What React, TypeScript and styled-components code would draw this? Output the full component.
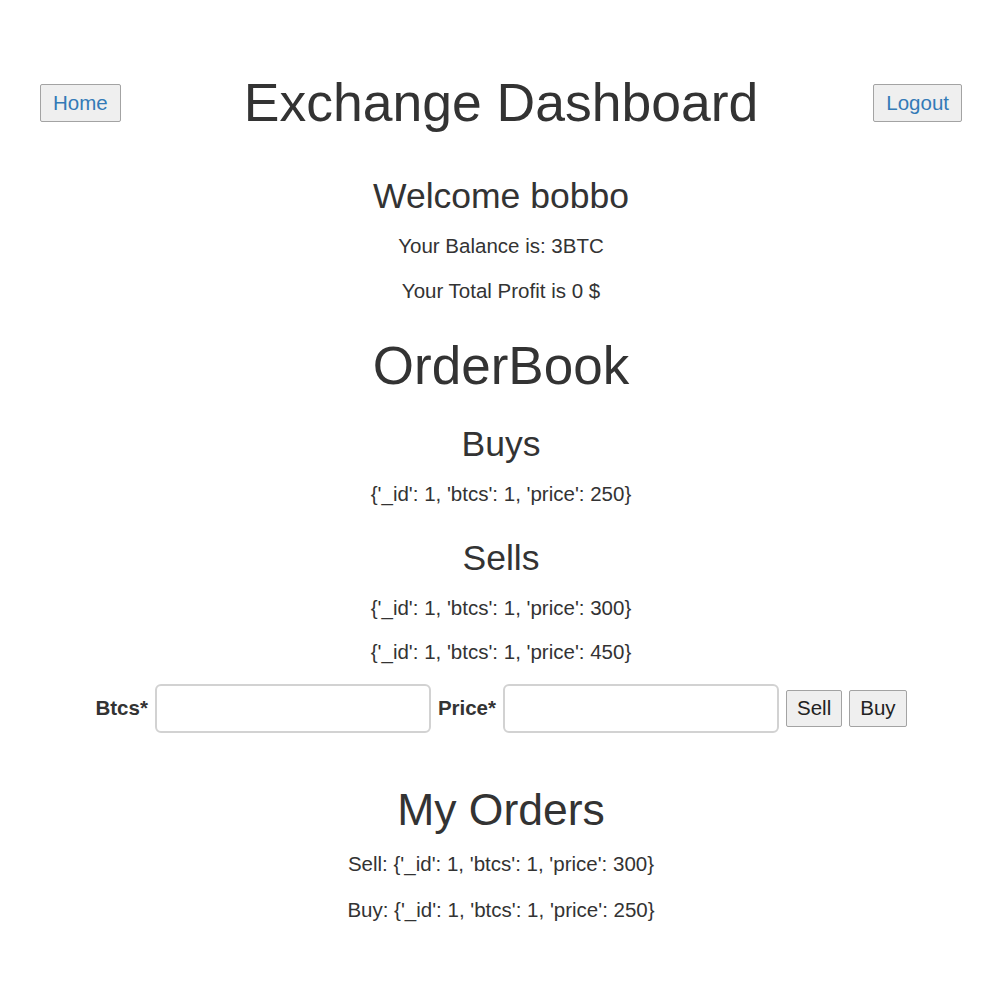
import styled, { createGlobalStyle } from 'styled-components';

const GlobalStyle = createGlobalStyle`
  html, body {
    margin: 0;
    padding: 0;
    background: #fff;
  }
  body {
    font-family: "Liberation Sans", Arial, Helvetica, sans-serif;
    font-size: 20.5px;
    line-height: 1.43;
    color: #333;
  }
`;

const Page = styled.div`
  padding: 74px 38px 40px 40px;
  text-align: center;
`;

const Header = styled.header`
  display: grid;
  grid-template-columns: 1fr auto 1fr;
  align-items: center;
  height: 58px;
`;

const NavButton = styled.button<{ $side: 'left' | 'right' }>`
  justify-self: ${({ $side }) => ($side === 'left' ? 'start' : 'end')};
  height: 38px;
  padding: 0 12px;
  font-family: inherit;
  font-size: 20.5px;
  color: #337ab7;
  background: #efefef;
  border: 1px solid #a3a3a3;
  border-radius: 2px;
  cursor: pointer;
`;

const Title = styled.h1`
  margin: 0;
  font-size: 53.5px;
  font-weight: 400;
  line-height: 58px;
  color: #333;
`;

const BigHeading = styled.h1<{ $top: number }>`
  margin: ${({ $top }) => $top}px 0 0;
  font-size: 53px;
  font-weight: 400;
  line-height: 58px;
`;

const SubHeading = styled.h3<{ $top: number }>`
  margin: ${({ $top }) => $top}px 0 15px;
  font-size: 35.5px;
  font-weight: 400;
  line-height: 39px;
`;

const SectionHeading = styled.h2<{ $top: number }>`
  margin: ${({ $top }) => $top}px 0 15px;
  font-size: 44.5px;
  font-weight: 400;
  line-height: 48px;
`;

const Line = styled.p<{ $gap?: number }>`
  margin: 0 0 ${({ $gap }) => $gap ?? 15}px;
  line-height: 29.5px;
`;

const OrderForm = styled.form`
  display: flex;
  justify-content: center;
  align-items: center;
  gap: 7px;
  margin-top: 17px;
`;

const Label = styled.label`
  font-weight: 700;
`;

const Field = styled.input`
  box-sizing: border-box;
  width: 276px;
  height: 49px;
  padding: 6px 12px;
  font-family: inherit;
  font-size: 20.5px;
  border: 2px solid #d2d2d2;
  border-radius: 6px;
  outline: none;
`;

const ActionButton = styled.button`
  height: 37px;
  padding: 0 10px;
  font-family: inherit;
  font-size: 20.5px;
  color: #222;
  background: #efefef;
  border: 1px solid #a3a3a3;
  border-radius: 2px;
  cursor: pointer;
`;

const buys = [{ _id: 1, btcs: 1, price: 250 }];
const sells = [
  { _id: 1, btcs: 1, price: 300 },
  { _id: 1, btcs: 1, price: 450 },
];

type Order = { _id: number; btcs: number; price: number };

const fmt = (o: Order) => `{'_id': ${o._id}, 'btcs': ${o.btcs}, 'price': ${o.price}}`;

const App = () => (
  <>
    <GlobalStyle />
    <Page>
      <Header>
        <NavButton $side="left">Home</NavButton>
        <Title>Exchange Dashboard</Title>
        <NavButton $side="right">Logout</NavButton>
      </Header>

      <SubHeading $top={45}>Welcome bobbo</SubHeading>
      <Line>Your Balance is: 3BTC</Line>
      <Line>Your Total Profit is 0 $</Line>

      <BigHeading $top={32}>OrderBook</BigHeading>
      <SubHeading $top={30}>Buys</SubHeading>
      {buys.map((o, i) => (
        <Line key={`b${i}`}>{fmt(o)}</Line>
      ))}
      <SubHeading $top={30}>Sells</SubHeading>
      {sells.map((o, i) => (
        <Line key={`s${i}`}>{fmt(o)}</Line>
      ))}

      <OrderForm onSubmit={(e) => e.preventDefault()}>
        <Label htmlFor="btcs">Btcs*</Label>
        <Field id="btcs" type="text" />
        <Label htmlFor="price">Price*</Label>
        <Field id="price" type="text" />
        <ActionButton type="button">Sell</ActionButton>
        <ActionButton type="button">Buy</ActionButton>
      </OrderForm>

      <SectionHeading $top={53}>My Orders</SectionHeading>
      <Line $gap={17}>Sell: {fmt(sells[0])}</Line>
      <Line>Buy: {fmt(buys[0])}</Line>
    </Page>
  </>
);

export default App;
